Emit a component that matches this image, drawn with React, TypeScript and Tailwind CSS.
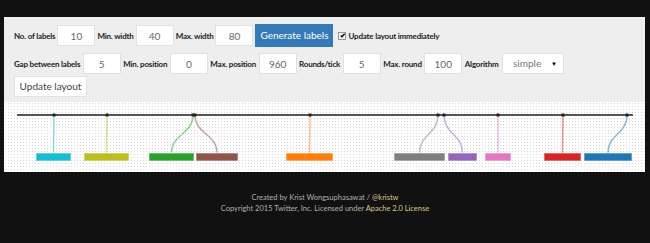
import React from "react";

type Label = { dot: number; x: number; w: number; color: string };

const labels: Label[] = [
  { dot: 50, x: 32, w: 35, color: "#17becf" },
  { dot: 103, x: 80, w: 45, color: "#bcbd22" },
  { dot: 189, x: 145, w: 45, color: "#2ca02c" },
  { dot: 191, x: 192, w: 42, color: "#8c564b" },
  { dot: 306, x: 282, w: 47, color: "#ff7f0e" },
  { dot: 434, x: 390, w: 51, color: "#7f7f7f" },
  { dot: 440, x: 444, w: 29, color: "#9467bd" },
  { dot: 494, x: 481, w: 26, color: "#e377c2" },
  { dot: 559, x: 540, w: 37, color: "#d62728" },
  { dot: 623, x: 580, w: 48, color: "#1f77b4" },
];

const Field = ({ label, value }: { label: string; value: string }) => (
  <>
    <span className="text-[8px] font-bold tracking-[-0.2px] text-[#222]">{label}</span>
    <input
      readOnly
      value={value}
      className="h-[21px] w-[38px] border border-[#e2e2e2] bg-white text-center text-[10px] text-[#666] outline-none"
    />
  </>
);

export default function App() {
  const axisY = 13;
  const rectY = 51;
  return (
    <div className="min-h-[243px] bg-[#111] pt-[17px] font-['Lato','Open_Sans',sans-serif]">
      <div className="ml-[4px] w-[641px] bg-white">
        <div className="bg-[#eee] pb-[5px] pl-[10px] pt-[7px]">
          <div className="flex items-center gap-[2px]">
            <Field label="No. of labels" value="10" />
            <Field label="Min. width" value="40" />
            <Field label="Max. width" value="80" />
            <button className="h-[23px] w-[78px] bg-[#337ab7] text-[10px] text-white">
              Generate labels
            </button>
            <label className="ml-[3px] flex items-center gap-[2px] text-[8px] font-bold tracking-[-0.2px] text-[#222]">
              <span className="flex h-[8px] w-[8px] items-center justify-center border border-[#999] bg-[#f4f4f4] text-[7px] leading-none text-black">
                ✔
              </span>
              Update layout immediately
            </label>
          </div>
          <div className="mt-[6px] flex items-center gap-[2.5px]">
            <Field label="Gap between labels" value="5" />
            <Field label="Min. position" value="0" />
            <Field label="Max. position" value="960" />
            <Field label="Rounds/tick" value="5" />
            <Field label="Max. round" value="100" />
            <span className="text-[8px] font-bold tracking-[-0.2px] text-[#222]">Algorithm</span>
            <div className="ml-[1px] flex h-[21px] w-[62px] items-center justify-between border border-[#e2e2e2] bg-white pl-[10px] pr-[6px] text-[10px] text-[#777]">
              simple
              <span className="text-[6px] text-black">▼</span>
            </div>
          </div>
          <button className="mt-[2px] block h-[21px] w-[73px] border border-[#e2e2e2] bg-white text-[10px] text-[#444]">
            Update layout
          </button>
        </div>
        <div className="h-[70px] bg-white bg-[radial-gradient(#dadada_0.6px,transparent_0.8px)] bg-[size:3px_3px]">
          <svg width="641" height="70" className="block">
            <line x1="13" y1={axisY} x2="629" y2={axisY} stroke="#555" strokeWidth="2" />
            {labels.map((l, i) => {
              const cx = l.x + l.w / 2;
              const midY = (axisY + rectY) / 2;
              return (
                <g key={i}>
                  <path
                    d={`M${l.dot},${axisY} C${l.dot},${midY} ${cx},${midY} ${cx},${rectY}`}
                    fill="none"
                    stroke={l.color}
                    strokeOpacity="0.5"
                    strokeWidth="1.5"
                  />
                  <rect
                    x={l.x}
                    y={rectY}
                    width={l.w}
                    height="8"
                    fill={l.color}
                    stroke="#fff"
                    strokeOpacity="0.6"
                  />
                  <rect x={l.dot - 1.5} y={axisY - 1.5} width="3" height="3" fill="#222" />
                </g>
              );
            })}
          </svg>
        </div>
      </div>
      <div className="mt-[20px] text-center text-[7.5px] leading-[11px] text-[#b0b0b0]">
        <div>
          Created by Krist Wongsuphasawat / <span className="text-[#d9c98a]">@kristw</span>
        </div>
        <div>
          Copyright 2015 Twitter, Inc. Licensed under{" "}
          <span className="text-[#d9c98a]">Apache 2.0 License</span>
        </div>
      </div>
    </div>
  );
}
